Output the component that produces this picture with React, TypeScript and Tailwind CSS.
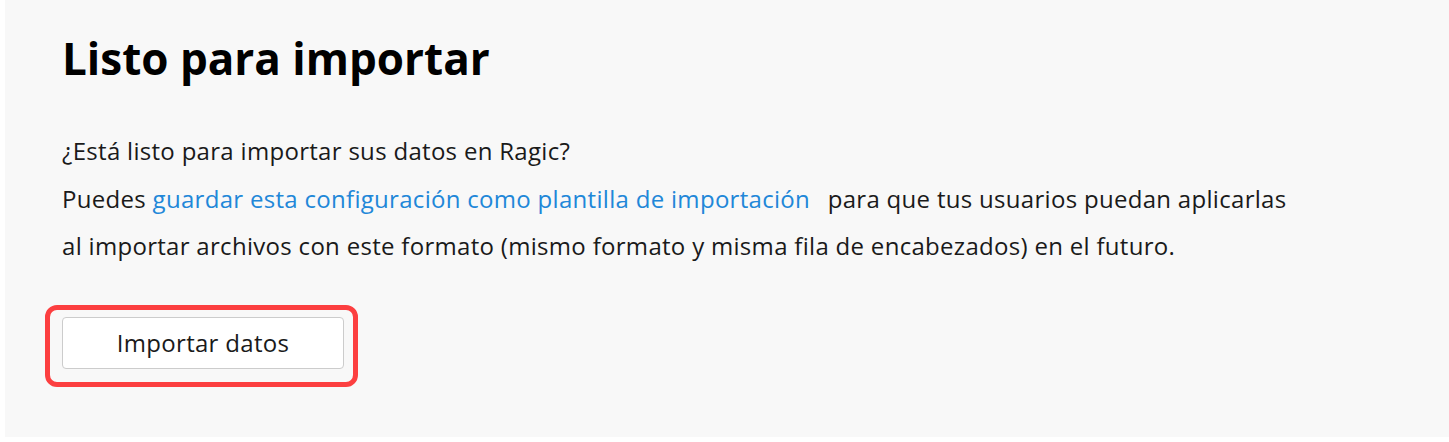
export default function App() {
  return (
    <div className="h-[442px] w-full bg-white pl-[5px] font-['Open_Sans',sans-serif]">
      <section className="h-[437px] bg-[#f8f8f8] pl-[57px] pt-[28px]">
        <h1 className="text-[44px] font-bold leading-[60px] text-black">
          Listo para importar
        </h1>
        <div className="mt-[39px] text-[24px] leading-[47.5px] tracking-[0.3px] text-[#1a1a1a]">
          <p>¿Está listo para importar sus datos en Ragic?</p>
          <p className="max-w-[1235px]">
            Puedes{" "}
            <a href="#" className="mr-[11px] text-[#2187d8]">
              guardar esta configuración como plantilla de importación
            </a>{" "}
            para que tus usuarios puedan aplicarlas al importar archivos con este
            formato (mismo formato y misma fila de encabezados) en el futuro.
          </p>
        </div>
        <div className="ml-[-17px] mt-[35px] inline-block rounded-[12px] border-[5px] border-[#fc3f40] pb-[13px] pl-[12px] pr-[9px] pt-[7px]">
          <button
            type="button"
            className="block h-[52px] w-[282px] rounded-[4px] border border-[#cccccc] bg-white text-[24px] tracking-[0.3px] text-[#1a1a1a]"
          >
            Importar datos
          </button>
        </div>
      </section>
    </div>
  );
}
